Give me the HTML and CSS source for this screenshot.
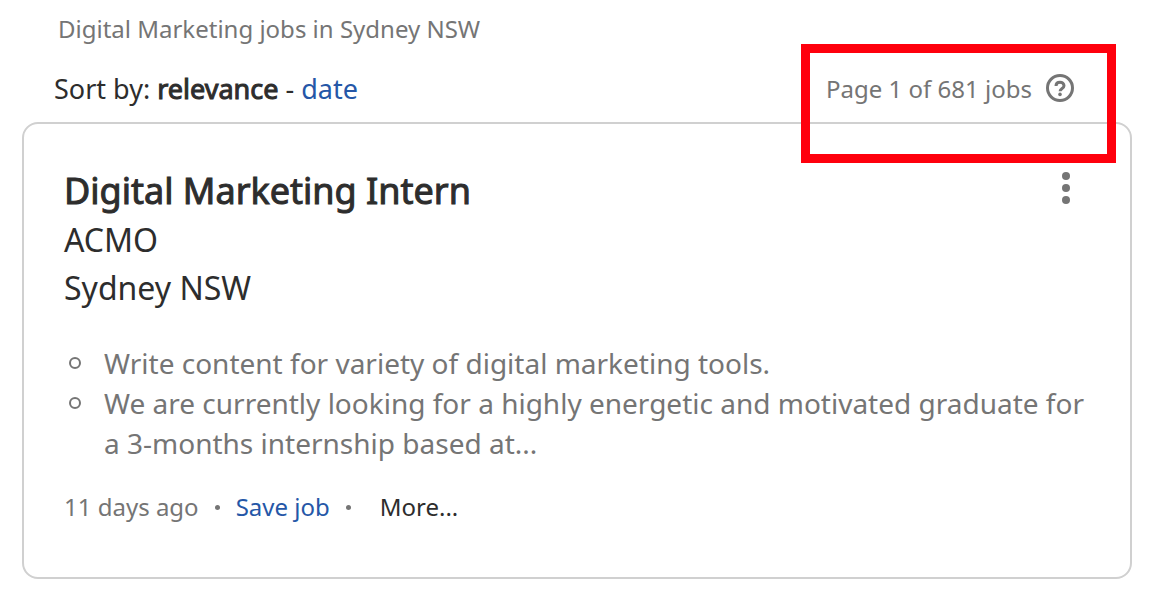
FILE: index.html
```html
<!DOCTYPE html>
<html lang="en">
<head>
    <meta charset="UTF-8">
    <meta name="viewport" content="width=device-width, initial-scale=1.0">
    <title>Digital Marketing jobs in Sydney NSW</title>
    <link rel="stylesheet" href="styles.css">
</head>
<body>

<main class="results">
    <h1 class="search-title">Digital Marketing jobs in Sydney NSW</h1>

    <div class="toolbar">
        <div class="sort">Sort by: <span class="current">relevance</span> - <a href="#">date</a></div>
        <div class="count">
            <span>Page 1 of 681 jobs</span>
            <button class="icon-button" type="button" aria-label="About these results">
                <svg width="30" height="30" viewBox="0 0 30 30" fill="none" stroke="#757575">
                    <circle cx="15" cy="14" r="12.5" stroke-width="3"/>
                    <path d="M11 12.1c0-2.5 1.7-3.9 4-3.9s4 1.4 4 3.5c0 2.8-3.9 2.7-3.9 5.6" stroke-width="3"/>
                    <circle cx="15" cy="20.4" r="1.8" fill="#757575" stroke="none"/>
                </svg>
            </button>
            <div class="highlight"></div>
        </div>
    </div>

    <article class="card">
        <div class="card-head">
            <h2 class="job-title">Digital Marketing Intern</h2>
            <button class="icon-button" type="button" aria-label="Job options">
                <svg width="10" height="40" viewBox="0 0 10 40" fill="#757575">
                    <circle cx="5" cy="5" r="4"/>
                    <circle cx="5" cy="17" r="4"/>
                    <circle cx="5" cy="29" r="4"/>
                </svg>
            </button>
        </div>
        <p class="company">ACMO</p>
        <p class="company">Sydney NSW</p>

        <ul class="summary">
            <li>Write content for variety of digital marketing tools.</li>
            <li>We are currently looking for a highly energetic and motivated graduate for a 3-months internship based at...</li>
        </ul>

        <div class="meta">
            <span>11 days ago</span>
            <span class="dot"></span>
            <a href="#">Save job</a>
            <span class="dot"></span>
            <button class="more" type="button">More...</button>
        </div>
    </article>
</main>

</body>
</html>
```
FILE: styles.css
```css
* {
    box-sizing: border-box;
}
body {
    margin: 0;
    background: #fff;
    font-family: "Noto Sans", sans-serif;
    color: #2d2d2d;
}
h1, h2, p, ul {
    margin: 0;
    padding: 0;
    font-weight: 400;
}
a {
    color: #2557a7;
    text-decoration: none;
}
button {
    border: 0;
    padding: 0;
    background: none;
    font: inherit;
    color: inherit;
    cursor: pointer;
}
.results {
    padding: 13px 24px 14px 22px;
}
.search-title {
    padding-left: 36px;
    font-size: 24px;
    line-height: 32px;
    color: #757575;
}
.toolbar {
    display: flex;
    justify-content: space-between;
    align-items: center;
    margin: 28px 0 17px;
    padding: 0 57px 0 32px;
    line-height: 32px;
}
.sort {
    font-size: 27px;
    line-height: 30px;
}
.current {
    -webkit-text-stroke: 1px #2d2d2d;
}
.count {
    position: relative;
    display: flex;
    align-items: center;
    gap: 13px;
    font-size: 24px;
    color: #757575;
}
.icon-button {
    display: flex;
}
/* red frame drawn over the page count */
.highlight {
    position: absolute;
    top: -29px;
    right: -41px;
    bottom: -58px;
    left: -25px;
    border: 9px solid #ff000d;
    pointer-events: none;
}
.card {
    padding: 43px 40px 54px;
    border: 2px solid #d0d0d0;
    border-radius: 16px;
}
.card-head {
    display: flex;
    justify-content: space-between;
    align-items: center;
    margin-bottom: 1px;
    padding-right: 19px;
}
.job-title {
    font-size: 36px;
    line-height: 48px;
    -webkit-text-stroke: 1px #2d2d2d;
}
.company {
    font-size: 32px;
    line-height: 48px;
}
.summary {
    margin-top: 31px;
    list-style: none;
    font-size: 28px;
    line-height: 40px;
    color: #757575;
}
.summary li {
    display: flex;
    gap: 23px;
}
.summary li::before {
    content: "";
    box-sizing: border-box;
    flex: none;
    width: 12px;
    height: 12px;
    margin: 14px 0 0 5px;
    border: 2px solid #757575;
    border-radius: 50%;
}
.meta {
    display: flex;
    align-items: center;
    gap: 16px;
    margin-top: 28px;
    font-size: 24px;
    line-height: 32px;
    color: #757575;
}
.dot {
    width: 5px;
    height: 5px;
    border-radius: 50%;
    background: #757575;
}
.more {
    margin-left: 13px;
    color: #2d2d2d;
}
```
